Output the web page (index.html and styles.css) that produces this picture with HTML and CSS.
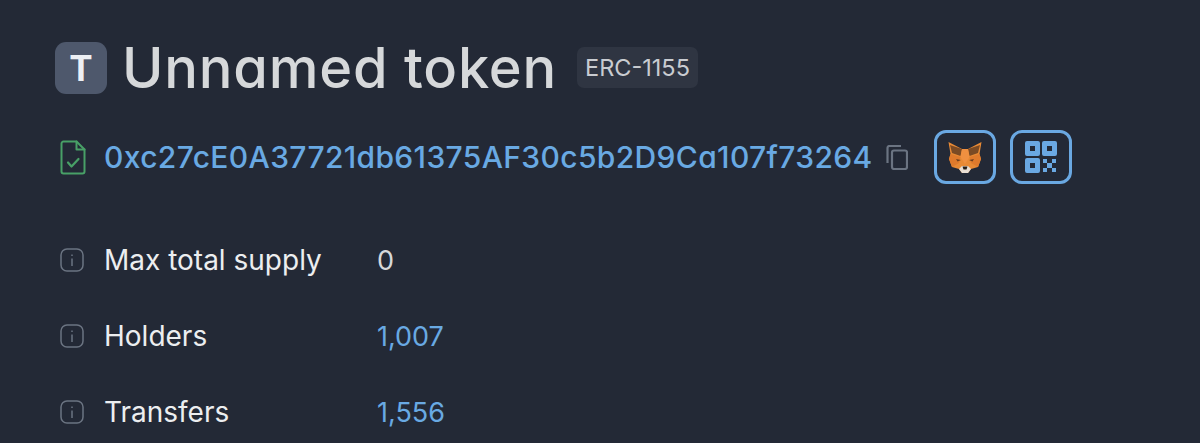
FILE: index.html
```html
<!DOCTYPE html>
<html lang="en">
<head>
  <meta charset="UTF-8">
  <title>Unnamed token</title>
  <link rel="stylesheet" href="styles.css">
</head>
<body>
<div class="container">
  <div class="title-row">
    <div class="token-icon">T</div>
    <h1>Unnamed token</h1>
    <span class="tag">ERC-1155</span>
  </div>
  <div class="address-row">
    <svg class="contract-icon" viewBox="0 0 26 35" fill="none" stroke="#48a067" stroke-width="2" stroke-linejoin="round" stroke-linecap="round">
      <path d="M3.5 1.5H16.5L24.5 9.5V31.5a2 2 0 0 1-2 2H3.500a2 2 0 0 1-2-2V3.500a2 2 0 0 1 2-2z"/>
      <path d="M16.500 1.500V9.500H24.500"/>
      <path d="M8 22.500L11.500 26.500L18.500 19" stroke-width="2.200"/>
    </svg>
    <a class="address">0xc27cE0A37721db61375AF30c5b2D9Ca107f73264</a>
    <svg class="copy-icon" viewBox="0 0 22 25" fill="none" stroke="#6b7482" stroke-width="2.200" stroke-linejoin="round">
      <path d="M1.500 18V3a2 2 0 0 1 2-2H15"/>
      <rect x="6" y="5.500" width="15" height="18.500" rx="2"/>
    </svg>
    <button class="icon-btn fox-btn">
      <svg viewBox="0 0 36 33" width="36" height="33">
        <path d="M1.500 1L15 8H21L34.500 1L32.500 13L34 18L31 26L24 28L21 32H15L12 28L5 26L2 18L3.500 13z" fill="#e88a35"/>
        <path d="M3 4L15 8L13.500 15L5 12z" fill="#7a4a24"/>
        <path d="M33 4L21 8L22.500 15L31 12z" fill="#7a4a24"/>
        <path d="M15 8H21L22.500 16L18 23L13.500 16z" fill="#f09040"/>
        <path d="M2 18L3.500 13L13.500 16L12 22L5 26z" fill="#df7a2c"/>
        <path d="M34 18L32.500 13L22.500 16L24 22L31 26z" fill="#df7a2c"/>
        <path d="M9 18L14 19L10.500 20.500z" fill="#6e4020"/>
        <path d="M27 18L22 19L25.500 20.500z" fill="#6e4020"/>
        <path d="M12 28L15 25H21L24 28L21 32H15z" fill="#eadfd4"/>
        <path d="M15.500 25.500H20.500L19.500 28.500H16.500z" fill="#2a2018"/>
      </svg>
    </button>
    <button class="icon-btn">
      <svg viewBox="0 0 32 32" width="32" height="32" fill="#6aa8e2">
        <path fill-rule="evenodd" d="M0 2a2 2 0 0 1 2-2h11a2 2 0 0 1 2 2v11a2 2 0 0 1-2 2H2a2 2 0 0 1-2-2zM5 5v5h5V5z"/>
        <path fill-rule="evenodd" d="M17 2a2 2 0 0 1 2-2h11a2 2 0 0 1 2 2v11a2 2 0 0 1-2 2H19a2 2 0 0 1-2-2zM22 5v5h5V5z"/>
        <path fill-rule="evenodd" d="M0 19a2 2 0 0 1 2-2h11a2 2 0 0 1 2 2v11a2 2 0 0 1-2 2H2a2 2 0 0 1-2-2zM5 22v5h5v-5z"/>
        <path d="M18 18h4v4h-4zM27 18h4v4h-4zM22 22h5v5h-5zM18 27h4v4h-4zM27 27h4v4h-4z"/>
      </svg>
    </button>
  </div>
  <div class="details">
    <div class="detail">
      <svg class="info-icon" viewBox="0 0 24 24" fill="none" stroke="#6b7482" stroke-width="1.500"><rect x="1" y="1" width="22" height="22" rx="6"/><path d="M12 10.500V18M12 6.500V8"/></svg>
      <span class="label">Max total supply</span>
      <span class="value">0</span>
    </div>
    <div class="detail">
      <svg class="info-icon" viewBox="0 0 24 24" fill="none" stroke="#6b7482" stroke-width="1.500"><rect x="1" y="1" width="22" height="22" rx="6"/><path d="M12 10.500V18M12 6.500V8"/></svg>
      <span class="label">Holders</span>
      <a class="value link">1,007</a>
    </div>
    <div class="detail">
      <svg class="info-icon" viewBox="0 0 24 24" fill="none" stroke="#6b7482" stroke-width="1.500"><rect x="1" y="1" width="22" height="22" rx="6"/><path d="M12 10.500V18M12 6.500V8"/></svg>
      <span class="label">Transfers</span>
      <a class="value link">1,556</a>
    </div>
  </div>
</div>
</body>
</html>
```
FILE: styles.css
```css
html, body { height: 100%; }
body {
  margin: 0;
  background: #232936;
  color: #e6e8eb;
  font-family: Inter, "Liberation Sans", sans-serif;
  overflow: hidden;
}
.container { padding: 42px 0 0 55px; }
.title-row {
  display: flex;
  align-items: center;
  height: 52px;
}
.token-icon {
  width: 52px;
  height: 52px;
  border-radius: 11px;
  background: #4e586c;
  color: #edf0f5;
  font-size: 35px;
  font-weight: 700;
  display: flex;
  align-items: center;
  justify-content: center;
  margin-right: 15px;
}
h1 {
  margin: 0 20px 0 0;
  font-size: 56px;
  font-weight: 500;
  letter-spacing: 0.8px;
  color: #d6d8da;
  font-feature-settings: "cv11";
  white-space: nowrap;
}
.tag {
  display: flex;
  align-items: center;
  height: 41px;
  padding: 0 8px;
  border-radius: 7px;
  background: #2f3542;
  color: #c9ccd1;
  font-size: 23.5px;
  margin-top: -1px;
}
.address-row {
  display: flex;
  align-items: center;
  margin-top: 36px;
  height: 54px;
}
.contract-icon { width: 26px; height: 35px; margin: 0 0 0 5px; }
.address {
  margin-left: 18px;
  font-size: 30px;
  font-weight: 500;
  letter-spacing: 0.36px;
  color: #69a9e3;
  font-feature-settings: "cv11";
  white-space: nowrap;
}
.copy-icon { width: 22px; height: 25px; margin-left: 13px; }
.icon-btn {
  width: 62px;
  height: 54px;
  padding: 0;
  margin-left: 14px;
  background: none;
  border: 3px solid #6aa8e2;
  border-radius: 12px;
  display: flex;
  align-items: center;
  justify-content: center;
}
.fox-btn { margin-left: 26px; }
.details { margin-top: 38px; }
.detail {
  display: flex;
  align-items: center;
  height: 76px;
}
.info-icon { width: 24px; height: 24px; margin-left: 5px; }
.label {
  width: 273px;
  margin-left: 20px;
  font-size: 28px;
  color: #eceef0;
  white-space: nowrap;
}
.value { font-size: 27px; color: #d6d8da; }
.link { color: #69a9e3; }
```
